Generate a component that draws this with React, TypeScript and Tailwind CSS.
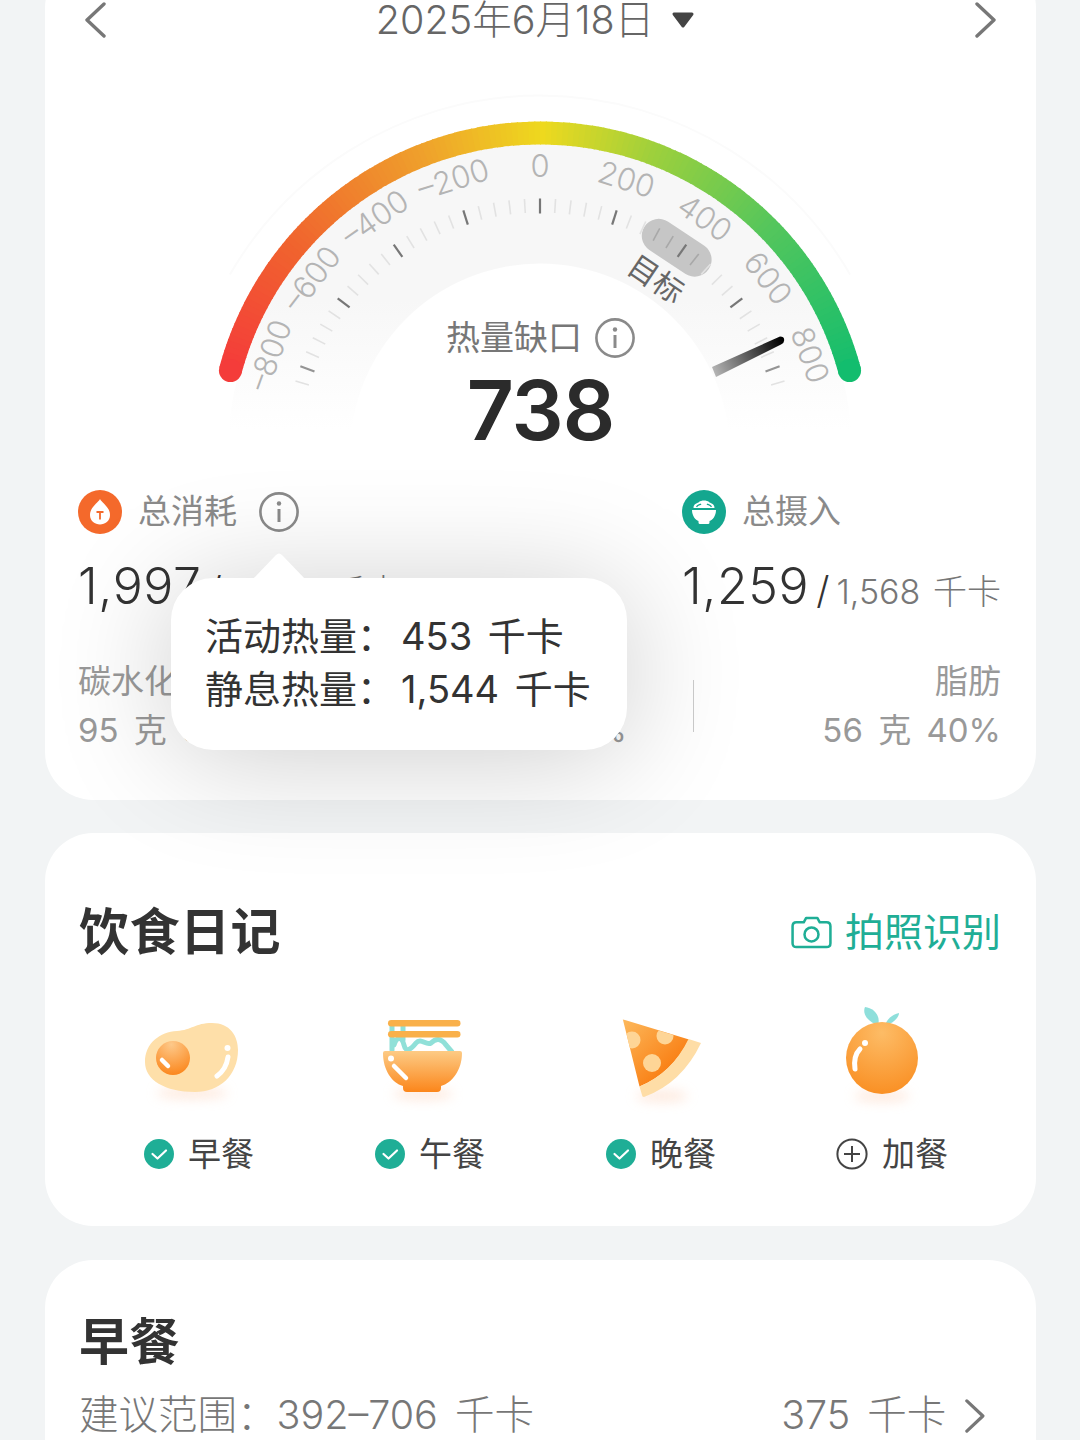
import React from "react";

const CX = 540;
const CY = 453.5;
const pt = (deg: number, r: number) => {
  const a = (deg * Math.PI) / 180;
  return { x: CX + r * Math.sin(a), y: CY - r * Math.cos(a) };
};

const stops: [number, number[]][] = [
  [-75, [244, 60, 58]],
  [-50, [240, 100, 46]],
  [-22, [239, 160, 44]],
  [0, [238, 217, 30]],
  [20, [158, 208, 60]],
  [45, [84, 198, 92]],
  [75, [18, 189, 110]],
];
const colorAt = (deg: number) => {
  for (let i = 0; i < stops.length - 1; i++) {
    const [a, ca] = stops[i];
    const [b, cb] = stops[i + 1];
    if (deg >= a && deg <= b) {
      const t = (deg - a) / (b - a);
      const c = ca.map((v, k) => Math.round(v + (cb[k] - v) * t));
      return `rgb(${c[0]},${c[1]},${c[2]})`;
    }
  }
  return "rgb(18,189,110)";
};

const arcPath = (a: number, b: number, r: number) => {
  const p = pt(a, r);
  const q = pt(b, r);
  return `M${p.x} ${p.y} A${r} ${r} 0 0 1 ${q.x} ${q.y}`;
};

const segments = Array.from({ length: 150 }, (_, i) => -75 + i);
const ticks = Array.from({ length: 43 }, (_, i) => -73.5 + i * 3.5);
const labels = [
  ["–800", -70],
  ["–600", -52.5],
  ["–400", -35],
  ["–200", -17.5],
  ["0", 0],
  ["200", 17.5],
  ["400", 35],
  ["600", 52.5],
  ["800", 70],
] as const;

function Gauge() {
  const pill = pt(33.6, 247);
  const tipA = { x: 712, y: 367 };
  const tipB = { x: 716, y: 377 };
  return (
    <svg viewBox="45 90 991 360" width={991} height={360} className="block">
      <defs>
        <linearGradient id="band" gradientUnits="userSpaceOnUse" x1="0" y1="300" x2="0" y2="430">
          <stop offset="0" stopColor="#f7f7f7" />
          <stop offset="1" stopColor="#ffffff" />
        </linearGradient>
        <linearGradient id="needle" gradientUnits="userSpaceOnUse" x1="714" y1="372" x2="782" y2="340">
          <stop offset="0" stopColor="#b4b4b4" />
          <stop offset="1" stopColor="#000000" />
        </linearGradient>
      </defs>
      <path d={arcPath(-60, 60, 358)} fill="none" stroke="#fbfbfb" strokeWidth={2} />
      <path
        fillRule="evenodd"
        fill="url(#band)"
        d={`M${CX - 312} ${CY} A312 312 0 0 1 ${CX + 312} ${CY} L${CX + 190} ${CY} A190 190 0 0 0 ${CX - 190} ${CY} Z`}
      />
      {segments.map((d) => (
        <path key={d} d={arcPath(d, d + 1.2, 320.5)} fill="none" stroke={colorAt(d)} strokeWidth={23} />
      ))}
      <circle cx={pt(-75, 320.5).x} cy={pt(-75, 320.5).y} r={11.5} fill={colorAt(-75)} />
      <circle cx={pt(75, 320.5).x} cy={pt(75, 320.5).y} r={11.5} fill={colorAt(75)} />
      <rect
        x={pill.x - 38.5}
        y={pill.y - 17}
        width={77}
        height={34}
        rx={17}
        fill="#c6c6c6"
        transform={`rotate(33.6 ${pill.x} ${pill.y})`}
      />
      {ticks.map((d, i) => {
        const major = Math.abs((d / 17.5) % 1) < 0.001;
        const a = pt(d, major ? 240 : 241);
        const b = pt(d, 255);
        const inPill = d > 25 && d < 42;
        return (
          <line
            key={i}
            x1={a.x}
            y1={a.y}
            x2={b.x}
            y2={b.y}
            stroke={major ? (Math.abs(d) > 60 ? "#949494" : "#777777") : inPill ? "#a8a8a8" : "#e2e2e2"}
            strokeWidth={major ? 2.2 : 1.6}
          />
        );
      })}
      {labels.map(([t, d]) => {
        const p = pt(d, 288);
        return (
          <text
            key={t}
            x={p.x}
            y={p.y}
            textAnchor="middle"
            dominantBaseline="central"
            fontSize={31}
            fontWeight={300}
            fill="#b4b4b4"
            transform={`rotate(${d} ${p.x} ${p.y})`}
          >
            {t}
          </text>
        );
      })}
      <text
        x={656}
        y={279}
        textAnchor="middle"
        dominantBaseline="central"
        fontSize={30}
        fill="#666666"
        transform="rotate(34 656 279)"
      >
        目标
      </text>
      <path
        d={`M${tipA.x} ${tipA.y} L780 336.5 Q785 336.5 784 341 Q784 343 781 344.5 L${tipB.x} ${tipB.y} Z`}
        fill="url(#needle)"
      />
    </svg>
  );
}

function Info({ size = 40, color = "#8a8a8a" }: { size?: number; color?: string }) {
  return (
    <svg viewBox="0 0 40 40" width={size} height={size} className="shrink-0">
      <circle cx="20" cy="20" r="18.6" fill="none" stroke={color} strokeWidth="2.6" />
      <circle cx="20" cy="11.5" r="2.2" fill={color} />
      <path d="M20 17 V30" stroke={color} strokeWidth="3" fill="none" />
    </svg>
  );
}

function FlameBadge() {
  return (
    <svg viewBox="0 0 44 44" width={44} height={44} className="shrink-0">
      <circle cx="22" cy="22" r="22" fill="#f4692b" />
      <path
        d="M22 9 C24 13 32 17 32 25 C32 31 27 34.5 22 34.5 C17 34.5 12 31 12 25 C12 17 20 13 22 9 Z"
        fill="#ffffff"
      />
      <path d="M18.5 22 H25.5 M22 22 V29.5" stroke="#f4692b" strokeWidth="1.8" fill="none" />
    </svg>
  );
}

function BowlBadge() {
  return (
    <svg viewBox="0 0 44 44" width={44} height={44} className="shrink-0">
      <circle cx="22" cy="22" r="22" fill="#14a78f" />
      <path
        d="M11.5 18 C11.5 13 16 13.5 17 12 C19 10 25 10 27 12 C28 13.5 32.5 13 32.5 18 Z"
        fill="#ffffff"
      />
      <path d="M14.5 16.8 C16 14.5 18 15 19 14 M25 14 C26 15 28 14.5 29.5 16.8" stroke="#14a78f" strokeWidth="1.3" fill="none" />
      <path
        d="M10 20 H34 C34 26 30.5 30 27.5 31 V32.5 Q27.5 34 26 34 H18 Q16.5 34 16.5 32.5 V31 C13.5 30 10 26 10 20 Z"
        fill="#ffffff"
      />
    </svg>
  );
}

function Check() {
  return (
    <svg viewBox="0 0 30 30" width={30} height={30} className="shrink-0">
      <circle cx="15" cy="15" r="15" fill="#1fae96" />
      <path d="M8.5 15 L13.5 19.5 L22 11.5" fill="none" stroke="#ffffff" strokeWidth="2.2" strokeLinecap="round" strokeLinejoin="round" />
    </svg>
  );
}

function PlusCircle() {
  return (
    <svg viewBox="0 0 32 32" width={32} height={32} className="shrink-0">
      <circle cx="16" cy="16" r="14.6" fill="none" stroke="#444444" strokeWidth="2" />
      <path d="M16 8 V24 M8 16 H24" stroke="#444444" strokeWidth="2" fill="none" />
    </svg>
  );
}

function Chevron({ dir, size = 36, color = "#777777", width = 3.4 }: { dir: "l" | "r"; size?: number; color?: string; width?: number }) {
  return (
    <svg viewBox="0 0 24 36" width={(size * 24) / 36} height={size} className="shrink-0">
      <path
        d={dir === "l" ? "M21 2 L4 18 L21 34" : "M3 2 L20 18 L3 34"}
        fill="none"
        stroke={color}
        strokeWidth={width}
        strokeLinecap="round"
        strokeLinejoin="round"
      />
    </svg>
  );
}

function Camera() {
  return (
    <svg viewBox="0 0 42 34" width={41} height={33} className="shrink-0">
      <path
        d="M5.5 6.5 H13 L15.5 2 H27 L29.5 6.5 H36.5 Q40.5 6.5 40.5 10.5 V28 Q40.5 32 36.5 32 H5.5 Q1.5 32 1.5 28 V10.5 Q1.5 6.5 5.5 6.5 Z"
        fill="none"
        stroke="#1fae96"
        strokeWidth="2.6"
        strokeLinejoin="round"
      />
      <circle cx="21" cy="19" r="7.2" fill="none" stroke="#1fae96" strokeWidth="2.6" />
    </svg>
  );
}

function Soft({ cx, cy, rx, ry, id }: { cx: number; cy: number; rx: number; ry: number; id: string }) {
  return (
    <>
      <filter id={id} x="-50%" y="-100%" width="200%" height="300%">
        <feGaussianBlur stdDeviation="6" />
      </filter>
      <ellipse cx={cx} cy={cy} rx={rx} ry={ry} fill="#fdd9c4" opacity="0.55" filter={`url(#${id})`} />
    </>
  );
}

function Egg() {
  return (
    <svg viewBox="134 1000 130 115" width={130} height={115}>
      <defs>
        <radialGradient id="yolk" cx="0.45" cy="0.1" r="0.95">
          <stop offset="0" stopColor="#fdc98a" />
          <stop offset="1" stopColor="#fb8418" />
        </radialGradient>
      </defs>
      <Soft cx={192} cy={1093} rx={36} ry={6} id="s1" />
      <path
        d="M145 1062 C145 1043 160 1032 177 1031 C192 1030 195 1023 212 1023 C230 1023 238 1036 238 1050 C238 1075 220 1092 195 1092 C165 1092 145 1080 145 1062 Z"
        fill="#fedfa9"
      />
      <circle cx="173" cy="1058" r="17" fill="url(#yolk)" />
      <path d="M162 1060 L168 1066" stroke="#ffffff" strokeWidth="4.5" strokeLinecap="round" />
      <path d="M217 1076 C224 1071 227 1064 228 1057" fill="none" stroke="#ffffff" strokeWidth="5" strokeLinecap="round" />
      <circle cx="227.5" cy="1048" r="3" fill="#ffffff" />
    </svg>
  );
}

function Noodle() {
  return (
    <svg viewBox="365 1000 130 115" width={130} height={115}>
      <defs>
        <linearGradient id="bowl" x1="0" y1="0" x2="0" y2="1">
          <stop offset="0" stopColor="#fdcb85" />
          <stop offset="1" stopColor="#fb861b" />
        </linearGradient>
      </defs>
      <Soft cx={423} cy={1094} rx={30} ry={6} id="s2" />
      <path
        d="M392 1026 V1050 M403 1026 V1040 M394 1045 C397 1036 402 1037 404 1045 C406 1054 412 1048 416 1043 C421 1037 426 1046 431 1043 C436 1038 441 1038 446 1045 L452 1052"
        fill="none"
        stroke="#90e0d8"
        strokeWidth="5"
        strokeLinecap="round"
      />
      <rect x="388" y="1020" width="72.5" height="6.5" rx="3.2" fill="#f9b04a" />
      <rect x="388" y="1031" width="72.5" height="6.5" rx="3.2" fill="#f9b04a" />
      <path
        d="M383 1053 Q383 1051 385 1051 H460 Q462 1051 462 1053 C462 1070 452 1083 441 1086 V1088 Q441 1092 437 1092 H407 Q403 1092 403 1088 V1086 C392 1083 383 1070 383 1053 Z"
        fill="url(#bowl)"
      />
      <circle cx="391" cy="1058.5" r="3" fill="#ffffff" />
      <path d="M394 1066 L406 1078" stroke="#ffffff" strokeWidth="4.5" strokeLinecap="round" />
    </svg>
  );
}

function Pizza() {
  return (
    <svg viewBox="596 1000 130 115" width={130} height={115}>
      <defs>
        <linearGradient id="slice" x1="0" y1="0" x2="0.75" y2="0.8">
          <stop offset="0" stopColor="#fdb95c" />
          <stop offset="1" stopColor="#f97c10" />
        </linearGradient>
        <clipPath id="sliceclip">
          <path d="M623 1020 L689 1039.5 Q672 1073 639.5 1086.5 Z" />
        </clipPath>
      </defs>
      <Soft cx={662} cy={1096} rx={26} ry={6} id="s3" />
      <path d="M623 1020 Q622 1019 625 1020 L689 1039.5 Q672 1073 639.5 1086.5 Z" fill="url(#slice)" />
      <g clipPath="url(#sliceclip)" fill="#fed596">
        <circle cx="632" cy="1040" r="8.5" />
        <circle cx="665" cy="1036" r="8.5" />
        <circle cx="652" cy="1063" r="9" />
      </g>
      <path d="M688.5 1039 L701 1043 Q682 1083 644 1097 Q642 1097 642 1095 L639.5 1086.5 Q672 1073 688.5 1039 Z" fill="#fedda6" />
    </svg>
  );
}

function Orange() {
  return (
    <svg viewBox="827 1000 130 115" width={130} height={115}>
      <defs>
        <radialGradient id="orange" cx="0.5" cy="0.15" r="0.95">
          <stop offset="0" stopColor="#fdbc66" />
          <stop offset="1" stopColor="#f98b1d" />
        </radialGradient>
      </defs>
      <Soft cx={882} cy={1096} rx={28} ry={6} id="s4" />
      <path d="M878 1025 C868 1022 862 1014 865 1007 C874 1008 881 1016 878 1025 Z" fill="#8edfdb" />
      <path d="M885 1025 C887 1019 893 1014 899 1013 C899 1018 891 1025 885 1025 Z" fill="#8edfdb" />
      <circle cx="882" cy="1058" r="36" fill="url(#orange)" />
      <path d="M860 1049 C855 1054 854 1062 855 1069" fill="none" stroke="#ffffff" strokeWidth="5" strokeLinecap="round" />
      <circle cx="865" cy="1043" r="3" fill="#ffffff" />
    </svg>
  );
}

const meals = [
  { icon: <Egg />, name: "早餐", done: true },
  { icon: <Noodle />, name: "午餐", done: true },
  { icon: <Pizza />, name: "晚餐", done: true },
  { icon: <Orange />, name: "加餐", done: false },
];

export default function App() {
  return (
    <div
      lang="zh-CN"
      className="h-[1440px] w-[1080px] overflow-hidden bg-[#f2f4f5] font-['Inter','Noto_Sans_CJK_SC',sans-serif] [word-spacing:6px]"
    >
      {/* summary card */}
      <section className="relative z-10 ml-[45px] mt-[-40px] h-[840px] w-[991px] rounded-[48px] bg-white pt-[40px]">
        <div className="flex h-[40px] items-center justify-between pl-[38px] pr-[38px]">
          <Chevron dir="l" />
          <div className="mr-[10px] flex items-center text-[39.5px] font-light leading-[40px] text-[#666666] [word-spacing:0]">
            <span>2025年6月18日</span>
            <svg viewBox="0 0 24 18" width={24} height={18} className="ml-[17px]">
              <path d="M3 3 H21 L12 15 Z" fill="#444444" stroke="#444444" strokeWidth="3" strokeLinejoin="round" />
            </svg>
          </div>
          <Chevron dir="r" />
        </div>

        <div className="relative mt-[50px]">
          <Gauge />
          <div className="absolute inset-x-0 top-[228px] flex flex-col items-center">
            <div className="flex h-[40px] items-center gap-[13px]">
              <span className="text-[34px] leading-[40px] text-[#777777]">热量缺口</span>
              <Info />
            </div>
            <div className="mt-[8px] text-[82px] font-semibold leading-[90px] tracking-[-1px] text-[#2b2b2b]">738</div>
          </div>
        </div>

        <div className="mt-[40px] flex justify-between pl-[33px] pr-[36px]">
          <div>
            <div className="flex h-[44px] items-center">
              <FlameBadge />
              <span className="ml-[16px] text-[33px] text-[#8a8a8a]">总消耗</span>
              <span className="ml-[22px]">
                <Info />
              </span>
            </div>
            <div className="mt-[22px] flex h-[60px] items-baseline whitespace-nowrap leading-[60px] text-[#333333]">
              <span className="text-[50px] font-light tracking-[0.6px]">1,997</span>
              <span className="ml-[7px] text-[38px] font-light">/</span>
              <span className="ml-[7px] text-[34px] font-light text-[#777777] [word-spacing:3px]">2,306 千卡</span>
            </div>
          </div>
          <div className="w-[318px]">
            <div className="flex h-[44px] items-center">
              <BowlBadge />
              <span className="ml-[16px] text-[33px] text-[#8a8a8a]">总摄入</span>
            </div>
            <div className="mt-[22px] flex h-[60px] items-baseline whitespace-nowrap leading-[60px] text-[#333333]">
              <span className="text-[50px] font-light tracking-[0.6px]">1,259</span>
              <span className="ml-[7px] text-[38px] font-light">/</span>
              <span className="ml-[7px] text-[34px] font-light text-[#777777] [word-spacing:3px]">1,568 千卡</span>
            </div>
          </div>
        </div>

        <div className="mt-[41px] flex items-center pl-[33px] pr-[35px] text-[33px] leading-[49px] text-[#999999]">
          <div className="w-[230px] whitespace-nowrap">
            <div>碳水化合物</div>
            <div>95 克 30%</div>
          </div>
          <div className="h-[52px] w-[1px] bg-[#cccccc]" />
          <div className="w-[318px] whitespace-nowrap text-right">
            <div>蛋白质</div>
            <div>94 克 30%</div>
          </div>
          <div className="ml-[66px] h-[52px] w-[1px] bg-[#cccccc]" />
          <div className="flex-1 whitespace-nowrap text-right">
            <div>脂肪</div>
            <div>56 克 40%</div>
          </div>
        </div>

        {/* tooltip */}
        <div className="absolute left-[126px] top-[618px] h-[172px] w-[456px] rounded-[42px] bg-white pl-[34px] pt-[32px] text-[38px] leading-[53px] text-[#333333] shadow-[0_8px_120px_rgba(0,0,0,0.2)] [word-spacing:5px]">
          <svg viewBox="0 0 56 28" width={56} height={28} className="absolute left-[80px] top-[-25px]">
            <path d="M0 28 L25 2 Q28 -1 31 2 L56 28 Z" fill="#ffffff" />
          </svg>
          <div className="flex">
            <span>活动热量：</span>
            <span className="ml-[6px]">453 千卡</span>
          </div>
          <div className="flex">
            <span>静息热量：</span>
            <span className="ml-[6px]">1,544 千卡</span>
          </div>
        </div>
      </section>

      {/* diary card */}
      <section className="ml-[45px] mt-[33px] h-[393px] w-[991px] rounded-[48px] bg-white px-[34px] pt-[67px]">
        <div className="flex h-[64px] items-center justify-between pr-[1px]">
          <h2 className="text-[50px] font-bold leading-[64px] tracking-[0.5px] text-[#333333]">饮食日记</h2>
          <div className="flex items-center gap-[13px] text-[39px] text-[#1fae96]">
            <Camera />
            <span>拍照识别</span>
          </div>
        </div>
        <div className="ml-[4.5px] mt-[36px] grid w-[924px] grid-cols-4">
          {meals.map((m) => (
            <div key={m.name} className="flex flex-col items-center">
              <div className="flex h-[115px] items-end justify-center">{m.icon}</div>
              <div className="mt-[19px] flex h-[40px] items-center gap-[14px] text-[33px] leading-[40px] text-[#444444]">
                {m.done ? <Check /> : <PlusCircle />}
                <span>{m.name}</span>
              </div>
            </div>
          ))}
        </div>
      </section>

      {/* breakfast card */}
      <section className="ml-[45px] mt-[34px] h-[300px] w-[991px] rounded-[48px] bg-white px-[34px] pt-[52px]">
        <h2 className="text-[50px] font-bold leading-[60px] tracking-[0.5px] text-[#333333]">早餐</h2>
        <div className="mt-[19px] flex h-[50px] items-center justify-between pr-[15px] text-[39.5px] font-light text-[#777777]">
          <span>建议范围：392–706 千卡</span>
          <span className="flex items-center gap-[18px]">
            375 千卡
            <Chevron dir="r" size={34} />
          </span>
        </div>
      </section>
    </div>
  );
}
